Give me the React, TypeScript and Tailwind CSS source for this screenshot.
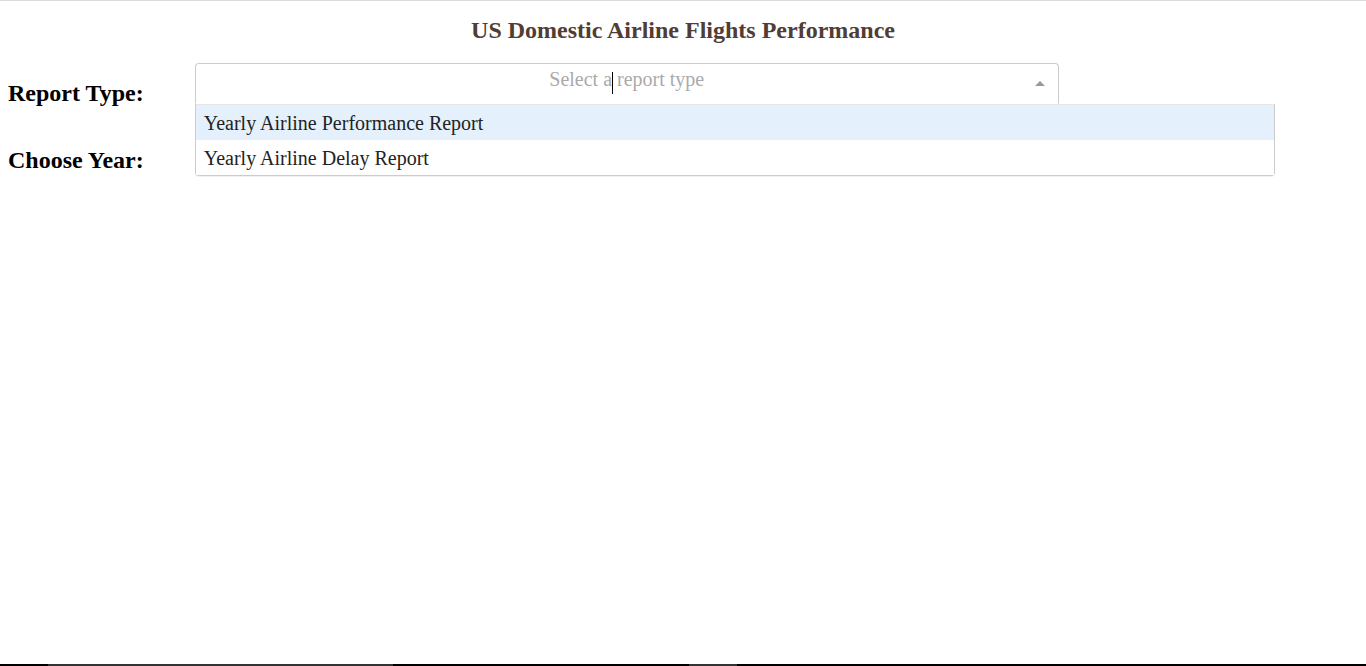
import { useState } from 'react';

const reportTypes = [
  { value: 'OPT1', label: 'Yearly Airline Performance Report' },
  { value: 'OPT2', label: 'Yearly Airline Delay Report' },
];

export default function App() {
  const [focused, setFocused] = useState(0);

  return (
    <div className="h-[666px] flex flex-col bg-white border-t border-[#dcdcdc] font-['Liberation_Serif','Times_New_Roman',serif] overflow-hidden">
      {/* Title */}
      <h1 className="pt-[15px] text-center text-[24px] leading-[28px] font-bold text-[#503D36]">
        US Domestic Airline Flights Performance
      </h1>

      <div className="mt-[16px] px-[8px]">
        {/* Report type row */}
        <div className="flex items-start h-[67px]">
          <h2 className="my-[20px] mr-[51px] text-[24px] leading-[27px] font-bold text-black whitespace-nowrap">
            Report Type:
          </h2>
          <div className="relative z-20 mt-[3px] w-[864px]">
            <div className="relative h-[41px] border border-[#ccc] border-b-white rounded-t-[4px] bg-white text-center">
              <div className="pt-[4px] text-[20px] leading-[23px] text-[#aaa]">Select a report type</div>
              <span className="absolute left-[416px] top-[8px] w-px h-[22px] bg-black" />
              <span className="absolute right-[13px] top-[17px] w-0 h-0 border-x-[5px] border-x-transparent border-b-[5px] border-b-[#999]" />
            </div>
            {/* Open menu */}
            <div className="absolute left-0 top-[41px] w-[1080px] bg-white border border-[#ccc] border-t-[#e6e6e6] rounded-b-[4px] shadow-[0_1px_0_rgba(0,0,0,0.06)]">
              {reportTypes.map((opt, i) => (
                <div
                  key={opt.value}
                  onMouseEnter={() => setFocused(i)}
                  className={`h-[35px] px-[8px] pt-[7px] pb-[5px] text-[20px] leading-[23px] text-[#222] cursor-default ${
                    i === focused ? 'bg-[#e4f1fd]' : 'bg-white'
                  }`}
                >
                  {opt.label}
                </div>
              ))}
            </div>
          </div>
        </div>

        {/* Year row */}
        <div className="flex items-start h-[67px]">
          <h2 className="my-[20px] mr-[51px] text-[24px] leading-[27px] font-bold text-black whitespace-nowrap">
            Choose Year:
          </h2>
          <div className="relative z-10 mt-[3px] w-[864px]">
            <div className="h-[41px] border border-[#ccc] rounded-[4px] bg-white" />
          </div>
        </div>
      </div>

      {/* bottom edge */}
      <div className="mt-auto flex h-[2px] bg-black">
        <div className="w-[48px]" />
        <div className="w-[345px] bg-[#333]" />
        <div className="w-[296px]" />
        <div className="w-[48px] bg-[#333]" />
      </div>
    </div>
  );
}
